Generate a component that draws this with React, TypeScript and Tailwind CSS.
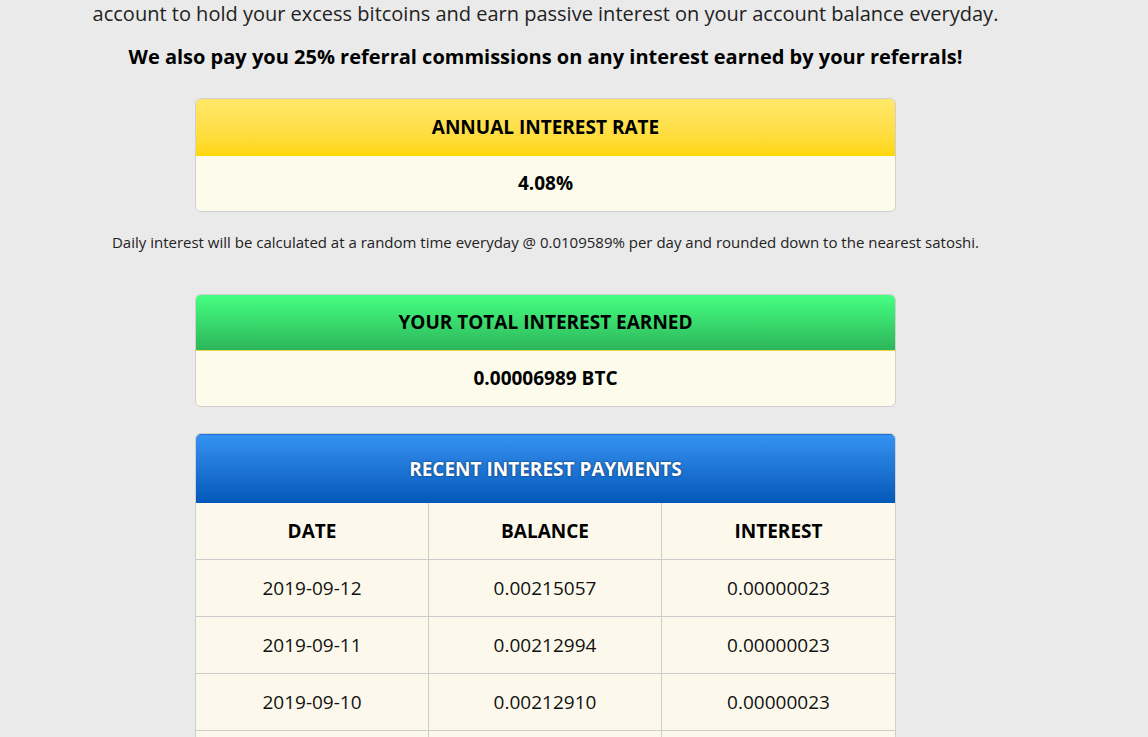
import React from "react";

const rows = [
  ["2019-09-12", "0.00215057", "0.00000023"],
  ["2019-09-11", "0.00212994", "0.00000023"],
  ["2019-09-10", "0.00212910", "0.00000023"],
  ["2019-09-09", "0.00212826", "0.00000023"],
];

export default function App() {
  return (
    <div
      className="min-h-[737px] w-full bg-[#eaeaea] text-[#111]"
      style={{ fontFamily: '"Open Sans", "Liberation Sans", sans-serif' }}
    >
      <div className="w-[1091px] flex flex-col items-center">
        <p className="text-[20px] leading-[28px] text-[#222] mt-0">
          account to hold your excess bitcoins and earn passive interest on your account balance everyday.
        </p>
        <p className="mt-[15px] text-[20px] leading-[28px] font-bold text-black">
          We also pay you 25% referral commissions on any interest earned by your referrals!
        </p>

        <div className="mt-[27px] w-[701px] rounded-[6px] border border-[#cfcfcf] overflow-hidden">
          <div className="h-[57px] flex items-center justify-center bg-gradient-to-b from-[#ffe86a] to-[#ffd700] text-[19px] font-bold text-black">
            ANNUAL INTEREST RATE
          </div>
          <div className="h-[55px] flex items-center justify-center bg-[#fdfbec] text-[19px] font-bold text-black">
            4.08%
          </div>
        </div>

        <p className="mt-[20px] text-[15px] leading-[20px] text-[#222]">
          Daily interest will be calculated at a random time everyday @ 0.0109589% per day and rounded down to the nearest satoshi.
        </p>

        <div className="mt-[42px] w-[701px] rounded-[6px] border border-[#cfcfcf] overflow-hidden">
          <div className="h-[56px] flex items-center justify-center bg-gradient-to-b from-[#46ff82] to-[#2db65a] border-b border-[#e8d84a] text-[19px] font-bold text-black">
            YOUR TOTAL INTEREST EARNED
          </div>
          <div className="h-[55px] flex items-center justify-center bg-[#fdfbec] text-[19px] font-bold text-black">
            0.00006989 BTC
          </div>
        </div>

        <div className="mt-[26px] w-[701px] rounded-t-[6px] border border-[#cfcfcf] overflow-hidden">
          <div className="h-[69px] flex items-center justify-center bg-gradient-to-b from-[#3592f2] to-[#0158b8] border-t border-[#1d6fd0] text-[19px] font-bold text-white [text-shadow:0_0_2px_rgba(0,0,0,0.7)]">
            RECENT INTEREST PAYMENTS
          </div>
          <div className="grid grid-cols-3 bg-[#fcf9ec]">
            {["DATE", "BALANCE", "INTEREST"].map((h, i) => (
              <div
                key={h}
                className={`h-[57px] flex items-center justify-center text-[19px] font-bold text-black border-b border-[#cccccc] ${i < 2 ? "border-r" : ""}`}
              >
                {h}
              </div>
            ))}
            {rows.map((r) =>
              r.map((c, i) => (
                <div
                  key={r[0] + i}
                  className={`h-[57px] flex items-center justify-center text-[19px] text-[#111] border-b border-[#cccccc] ${i < 2 ? "border-r" : ""}`}
                >
                  {c}
                </div>
              ))
            )}
          </div>
        </div>
      </div>
    </div>
  );
}
